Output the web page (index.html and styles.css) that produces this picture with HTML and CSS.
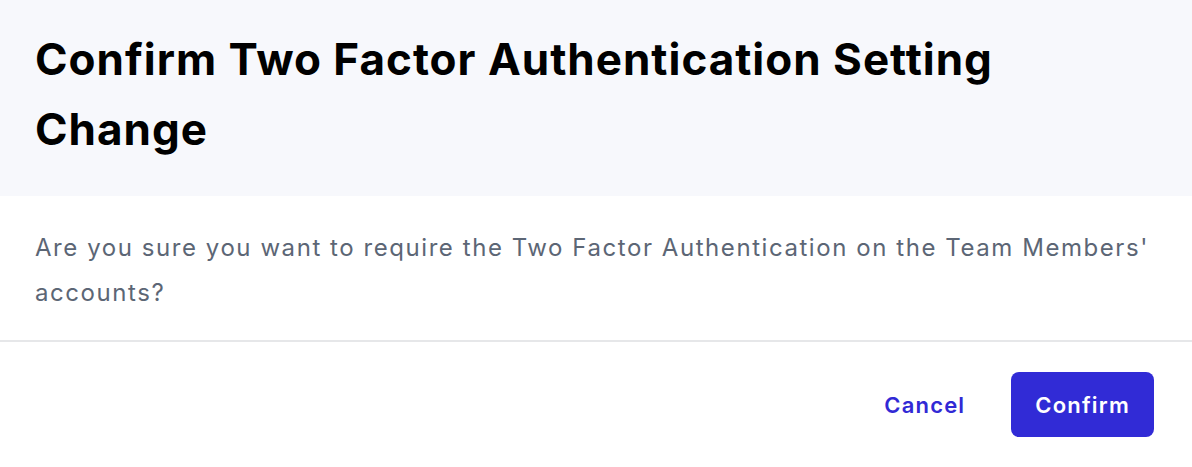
FILE: index.html
```html
<!DOCTYPE html>
<html>
<head>
<meta charset="utf-8">
<link rel="stylesheet" href="styles.css">
</head>
<body>
<div class="modal">
  <div class="modal-header">
    <h1 class="modal-title">Confirm Two Factor Authentication Setting Change</h1>
  </div>
  <div class="modal-body">
    <p class="modal-text">Are you sure you want to require the Two Factor Authentication on the Team Members' accounts?</p>
  </div>
  <div class="modal-footer">
    <button class="btn btn-link">Cancel</button>
    <button class="btn btn-primary">Confirm</button>
  </div>
</div>
</body>
</html>
```
FILE: styles.css
```css
html, body {
  margin: 0;
  padding: 0;
  background: #ffffff;
}
body {
  font-family: Inter, "Noto Sans", sans-serif;
  width: 1192px;
  height: 467px;
  overflow: hidden;
}
.modal {
  display: flex;
  flex-direction: column;
}
.modal-header {
  background: #f7f8fc;
  padding: 24px 35px 0;
  height: 196px;
  box-sizing: border-box;
}
.modal-title {
  margin: 0;
  font-size: 44px;
  line-height: 70px;
  font-weight: 700;
  color: #000000;
  letter-spacing: 1px;
  max-width: 1000px;
}
.modal-body {
  padding: 29px 35px 0;
  height: 146px;
  box-sizing: border-box;
  border-bottom: 2px solid #e6e7e9;
}
.modal-text {
  margin: 0;
  font-size: 24px;
  line-height: 45px;
  color: #5c6675;
  letter-spacing: 1.56px;
}
.modal-footer {
  display: flex;
  justify-content: flex-end;
  align-items: center;
  gap: 46px;
  padding: 30px 38px 0 0;
}
.btn {
  font-family: inherit;
  font-size: 22px;
  font-weight: 600;
  letter-spacing: 1.2px;
  border: none;
  cursor: pointer;
}
.btn-link {
  background: none;
  color: #3129d5;
  padding: 0;
}
.btn-primary {
  background: #312bd6;
  color: #ffffff;
  height: 65px;
  padding: 0 24px;
  border-radius: 8px;
}
```
